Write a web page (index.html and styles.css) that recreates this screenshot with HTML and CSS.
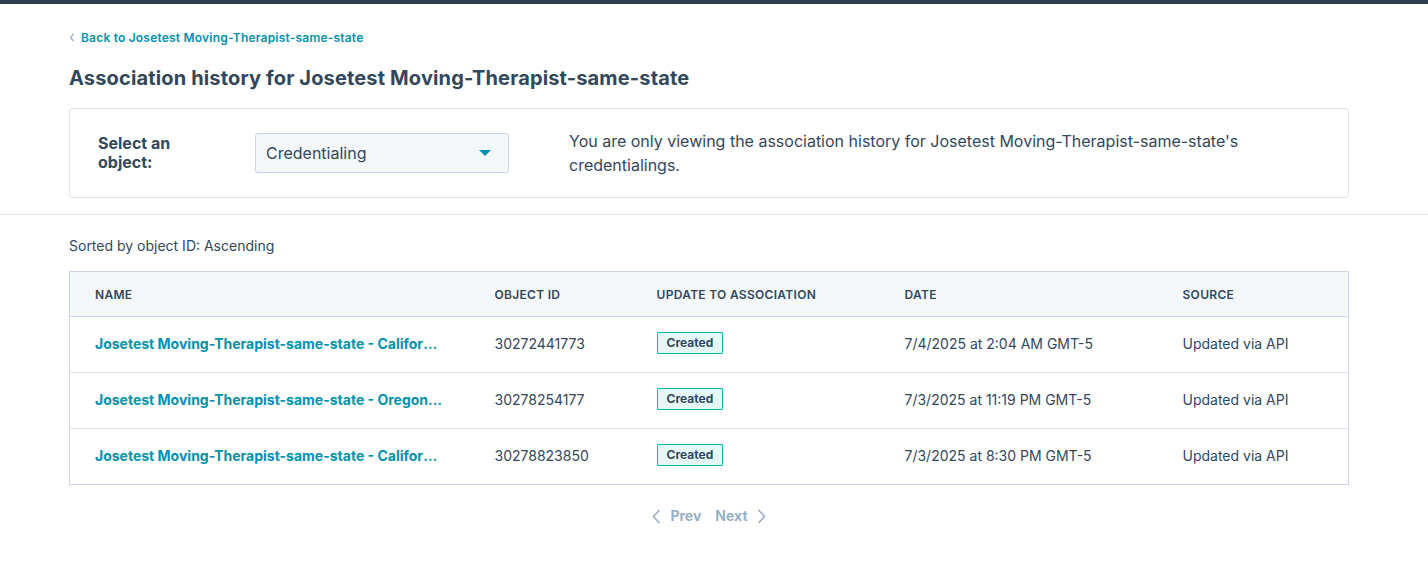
FILE: index.html
```html
<!DOCTYPE html>
<html lang="en">
<head>
<meta charset="utf-8">
<title>Association history</title>
<link rel="stylesheet" href="styles.css">
</head>
<body>
<div class="topbar"></div>
<div class="page">
  <div class="head">
    <a class="back" href="#">
      <svg class="back-chev" width="6" height="9" viewBox="0 0 6 9"><polyline points="4.5,1 1.5,4.5 4.5,8" fill="none" stroke="#99afc4" stroke-width="1.2"/></svg>
      <span>Back to Josetest Moving-Therapist-same-state</span>
    </a>
    <h1 class="title">Association history for Josetest Moving-Therapist-same-state</h1>
    <div class="card">
      <div class="label">Select an object:</div>
      <div class="select">
        <span>Credentialing</span>
        <svg class="caret" width="12" height="6" viewBox="0 0 12 6"><polygon points="0,0 12,0 6,6" fill="#0091ae"/></svg>
      </div>
      <p class="desc">You are only viewing the association history for Josetest Moving-Therapist-same-state's credentialings.</p>
    </div>
  </div>
  <hr class="divider">
  <div class="body">
    <div class="sorted">Sorted by object ID: Ascending</div>
    <table class="table">
      <colgroup>
        <col class="c-name"><col class="c-id"><col class="c-upd"><col class="c-date"><col class="c-src">
      </colgroup>
      <thead>
        <tr><th>Name</th><th>Object ID</th><th>Update to association</th><th>Date</th><th>Source</th></tr>
      </thead>
      <tbody>
        <tr>
          <td><a class="name" href="#">Josetest Moving-Therapist-same-state - California - Credentialing</a></td>
          <td>30272441773</td>
          <td><span class="tag">Created</span></td>
          <td>7/4/2025 at 2:04 AM GMT-5</td>
          <td>Updated via API</td>
        </tr>
        <tr>
          <td><a class="name" href="#">Josetest Moving-Therapist-same-state - Oregon - Credentialing</a></td>
          <td>30278254177</td>
          <td><span class="tag">Created</span></td>
          <td>7/3/2025 at 11:19 PM GMT-5</td>
          <td>Updated via API</td>
        </tr>
        <tr>
          <td><a class="name" href="#">Josetest Moving-Therapist-same-state - California - Credentialing</a></td>
          <td>30278823850</td>
          <td><span class="tag">Created</span></td>
          <td>7/3/2025 at 8:30 PM GMT-5</td>
          <td>Updated via API</td>
        </tr>
      </tbody>
    </table>
    <div class="pager">
      <span class="pg">
        <svg width="9" height="15" viewBox="0 0 9 15"><polyline points="7.5,1 1.5,7.5 7.5,14" fill="none" stroke="#99afc4" stroke-width="1.6"/></svg>
        Prev
      </span>
      <span class="pg">
        Next
        <svg width="9" height="15" viewBox="0 0 9 15"><polyline points="1.5,1 7.5,7.5 1.5,14" fill="none" stroke="#99afc4" stroke-width="1.6"/></svg>
      </span>
    </div>
  </div>
</div>
</body>
</html>
```

FILE: styles.css
```css
* { box-sizing: border-box; }
html, body { margin: 0; padding: 0; background: #fff; }
body {
  font-family: Inter, "Noto Sans", "Liberation Sans", sans-serif;
  color: #33475b;
}
.topbar { height: 4px; background: #2d3e50; }
.head, .body { padding: 0 79px 0 69px; }
.back {
  display: flex;
  align-items: center;
  gap: 6px;
  margin-top: 24px;
  height: 18px;
  font-size: 12px;
  font-weight: 600;
  letter-spacing: 0.2px;
  color: #0091ae;
  text-decoration: none;
}
.title {
  margin: 18px 0 0;
  font-size: 20px;
  line-height: 28px;
  font-weight: 700;
  letter-spacing: 0.15px;
  color: #33475b;
}
.card {
  margin-top: 16px;
  border: 1px solid #dfe3eb;
  border-radius: 3px;
  padding: 24px 28px;
  height: 90px;
  display: flex;
  align-items: flex-start;
}
.label {
  flex: 0 0 100px;
  margin-right: 57px;
  font-size: 16px;
  font-weight: 700;
  line-height: 19px;
  padding-top: 1px;
}
.select {
  flex: 0 0 254px;
  height: 40px;
  background: #f5f8fa;
  border: 1px solid #cbd6e2;
  border-radius: 3px;
  display: flex;
  align-items: center;
  justify-content: space-between;
  padding: 0 17px 0 10px;
  font-size: 16px;
}
.desc {
  margin: -4px 0 -4px 60px;
  font-size: 16px;
  line-height: 24px;
  max-width: 700px;
}
.divider {
  margin: 16px 0 0;
  border: 0;
  border-top: 1px solid #dfe3eb;
}
.sorted {
  margin-top: 21px;
  font-size: 14px;
  line-height: 20px;
}
.table {
  margin-top: 15px;
  width: 100%;
  border-collapse: collapse;
  table-layout: fixed;
  border: 1px solid #cbd6e2;
  font-size: 14px;
}
.c-name { width: 400px; }
.c-id { width: 162px; }
.c-upd { width: 248px; }
.c-date { width: 278px; }
.c-src { width: auto; }
th {
  background: #f5f8fa;
  height: 45px;
  text-align: left;
  font-size: 12px;
  font-weight: 600;
  text-transform: uppercase;
  letter-spacing: 0.3px;
  padding: 0 25px;
  border-bottom: 1px solid #cbd6e2;
}
td {
  height: 56px;
  padding: 0 25px 2px;
  border-top: 1px solid #dfe3eb;
  white-space: nowrap;
  overflow: hidden;
  text-overflow: ellipsis;
  vertical-align: middle;
}
tbody tr:first-child td { border-top: 0; }
.name {
  display: block;
  overflow: hidden;
  text-overflow: ellipsis;
  white-space: nowrap;
  color: #0091ae;
  font-weight: 700;
  text-decoration: none;
}
.tag {
  display: inline-block;
  position: relative;
  top: -1px;
  height: 22px;
  line-height: 20px;
  padding: 0 9px;
  background: #e5f8f6;
  border: 1px solid #00bda5;
  border-radius: 1px;
  font-size: 12px;
  font-weight: 700;
}
.pager {
  margin-top: 21px;
  display: flex;
  justify-content: center;
  gap: 14px;
  font-size: 14px;
  font-weight: 700;
  color: #99afc4;
  line-height: 20px;
}
.pg { display: flex; align-items: center; gap: 9px; }
```
